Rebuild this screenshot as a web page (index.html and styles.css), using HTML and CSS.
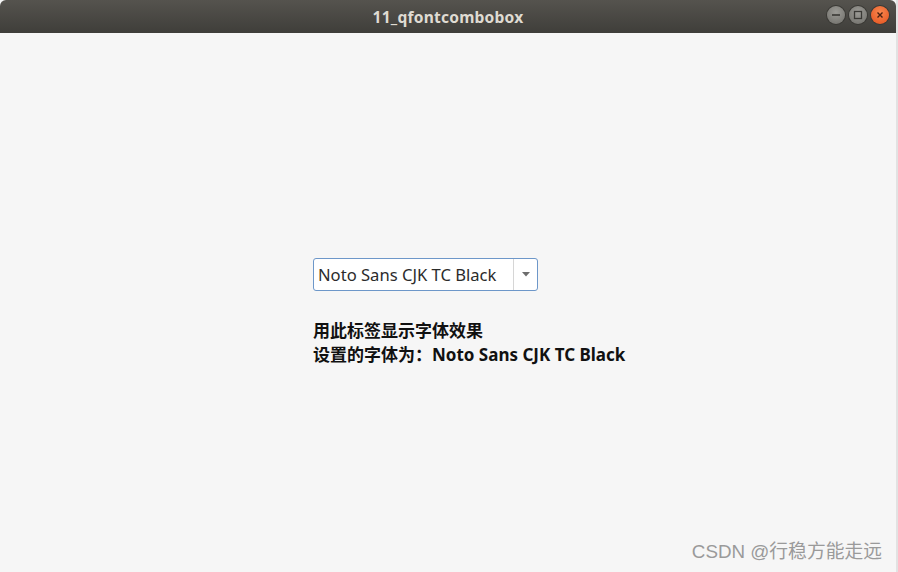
FILE: index.html
```html
<!DOCTYPE html>
<html lang="zh-CN">
<head>
    <meta charset="UTF-8">
    <title>11_qfontcombobox</title>
    <link rel="stylesheet" href="styles.css">
</head>
<body>
    <div class="window">
        <div class="titlebar">
            <span class="title">11_qfontcombobox</span>
            <div class="win-buttons">
                <span class="win-btn">
                    <svg width="10" height="10" viewBox="0 0 10 10"><path d="M1 5h8" stroke="#3a3935" stroke-width="1.6"/></svg>
                </span>
                <span class="win-btn">
                    <svg width="10" height="10" viewBox="0 0 10 10"><rect x="1.5" y="1.5" width="7" height="7" fill="none" stroke="#3a3935" stroke-width="1.3"/></svg>
                </span>
                <span class="win-btn close">
                    <svg width="10" height="10" viewBox="0 0 10 10"><path d="M2.5 2.5l5 5M7.5 2.5l-5 5" stroke="#4a2010" stroke-width="1.4"/></svg>
                </span>
            </div>
        </div>

        <div class="content">
            <div class="combo">
                <span class="combo-text">Noto Sans CJK TC Black</span>
                <span class="combo-arrow">
                    <svg width="8" height="5" viewBox="0 0 8 5"><path d="M0 0h8L4 4.5z" fill="#6d6d6d"/></svg>
                </span>
            </div>
            <div class="label">
                <div>用此标签显示字体效果</div>
                <div>设置的字体为：Noto Sans CJK TC Black</div>
            </div>
        </div>

        <div class="watermark">CSDN @行稳方能走远</div>
    </div>
</body>
</html>
```

FILE: styles.css
```css
body {
    margin: 0;
    font-family: "Noto Sans", "Noto Sans CJK SC", sans-serif;
}

.window {
    position: relative;
    width: 898px;
    height: 572px;
    background-color: #f6f6f6;
    box-sizing: border-box;
    border-right: 2px solid #e2e2e2;
    overflow: hidden;
}

.titlebar {
    position: relative;
    height: 33px;
    background: linear-gradient(#55534e, #3f3e3a);
    border-radius: 6px 6px 0 0;
    display: flex;
    align-items: center;
    justify-content: center;
}
.title {
    color: #dfdbd2;
    font-size: 15.6px;
    font-weight: bold;
    letter-spacing: 0.2px;
}
.win-buttons {
    position: absolute;
    right: 7px;
    top: 6px;
    display: flex;
    gap: 4px;
}
.win-btn {
    width: 18px;
    height: 18px;
    border-radius: 50%;
    background: radial-gradient(circle at 50% 35%, #9c9b96, #6e6d68);
    display: flex;
    align-items: center;
    justify-content: center;
    box-shadow: 0 0 0 1px #3a3935;
}
.win-btn.close {
    background: radial-gradient(circle at 50% 35%, #f7874f, #e4511d);
}

.content {
    padding: 225px 0 0 313px;
}

.combo {
    display: flex;
    width: 225px;
    height: 33px;
    box-sizing: border-box;
    border: 1px solid #6d97c9;
    border-radius: 3px;
    background-color: #fff;
}
.combo-text {
    flex-grow: 1;
    padding-left: 4px;
    font-size: 16.6px;
    line-height: 31px;
    color: #2b2b2b;
}
.combo-arrow {
    width: 23px;
    border-left: 1px solid #d6d6d6;
    display: flex;
    align-items: center;
    justify-content: center;
}

.label {
    margin-top: 28px;
    font-family: "Noto Sans", "Noto Sans CJK SC", sans-serif;
    font-size: 17px;
    font-weight: bold;
    line-height: 24px;
    color: #111;
}

.watermark {
    position: absolute;
    right: 14px;
    bottom: 9px;
    font-family: "Liberation Sans", "Noto Sans CJK SC", sans-serif;
    font-size: 18.8px;
    color: #9a9a9a;
}
```
